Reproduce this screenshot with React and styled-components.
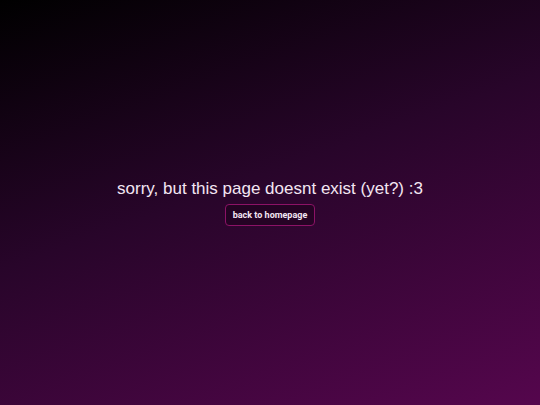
import React from "react";
import styled, { createGlobalStyle } from "styled-components";

const GlobalStyle = createGlobalStyle`
  html, body {
    margin: 0;
    padding: 0;
    height: 100%;
  }
  #root {
    height: 100%;
  }
`;

const Page = styled.main`
  min-height: 100vh;
  display: flex;
  flex-direction: column;
  align-items: center;
  justify-content: center;
  gap: 5px;
  background: linear-gradient(160deg, #000000 0%, #28052a 45%, #55064d 100%);
  font-family: "Liberation Sans", Arial, sans-serif;
`;

const Message = styled.h1`
  margin: 0;
  font-size: 17px;
  font-weight: 400;
  color: #f3e6f2;
  line-height: 20px;
`;

const HomeButton = styled.a`
  display: inline-block;
  padding: 5px 7px;
  border: 1px solid #8c1266;
  border-radius: 4px;
  background: rgba(20, 0, 18, 0.35);
  color: #f3e6f2;
  font-family: Roboto, "Liberation Sans", sans-serif;
  font-size: 9px;
  font-weight: 700;
  text-decoration: none;
  cursor: pointer;
`;

const App = () => {
  return (
    <>
      <GlobalStyle />
      <Page>
        <Message>sorry, but this page doesnt exist (yet?) :3</Message>
        <HomeButton href="#">back to homepage</HomeButton>
      </Page>
    </>
  );
};

export default App;
